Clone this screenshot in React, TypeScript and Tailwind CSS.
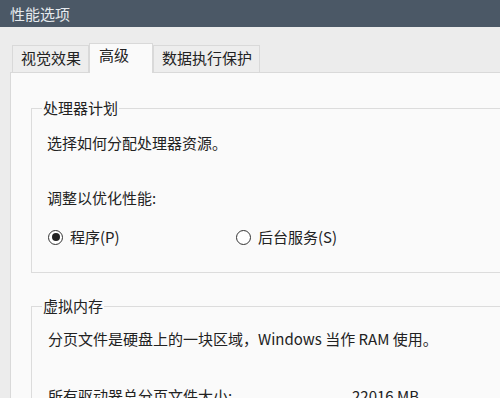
const font = "font-['Microsoft_YaHei','Noto_Sans_CJK_SC',sans-serif]";

function Tab({ label, width, active }: { label: string; width: string; active?: boolean }) {
  return (
    <div
      className={
        active
          ? `relative z-10 -mb-px flex h-[30px] items-start border-x border-t border-[#d9d9d9] bg-[#fafafa] pl-[9px] pt-[1px] ${width}`
          : `flex h-[27px] items-start border-x border-t border-[#d9d9d9] bg-[#ededed] pl-[8px] pt-[2px] ${width}`
      }
    >
      {label}
    </div>
  );
}

function Radio({ label, checked }: { label: string; checked?: boolean }) {
  return (
    <div className="flex items-center gap-[7px]">
      <span className="flex h-[15px] w-[15px] items-center justify-center rounded-full border-[1.5px] border-[#333] bg-white">
        {checked && <span className="h-[8px] w-[8px] rounded-full bg-[#222]" />}
      </span>
      <span>{label}</span>
    </div>
  );
}

export default function App() {
  return (
    <div className={`h-[398px] w-[500px] overflow-hidden bg-[#ececec] text-[15px] leading-[20px] text-[#222] ${font}`}>
      <div className="flex h-[27px] items-center bg-[#4b5866] pl-[10px] text-[#e6eaee]">性能选项</div>

      <div className="flex h-[45px] items-end pl-[12px]">
        <Tab label="视觉效果" width="w-[77px]" />
        <Tab label="高级" width="w-[64px]" active />
        <Tab label="数据执行保护" width="w-[107px]" />
      </div>

      <div className="ml-[10px] w-[560px] border-l border-t border-[#d9d9d9] bg-[#fafafa] pb-10">
        <fieldset className="ml-[20px] mt-[25px] border border-[#dcdcdc] pb-[25px] pl-[10px]">
          <legend className="px-px">处理器计划</legend>
          <div className="ml-[5px] mt-[15px]">选择如何分配处理器资源。</div>
          <div className="ml-[5px] mt-[35px]">调整以优化性能:</div>
          <div className="ml-[6px] mt-[19px] flex">
            <div className="w-[188px]">
              <Radio label="程序(P)" checked />
            </div>
            <Radio label="后台服务(S)" />
          </div>
        </fieldset>

        <fieldset className="ml-[20px] mt-[23px] border border-[#dcdcdc] pb-[25px] pl-[10px]">
          <legend className="px-px">虚拟内存</legend>
          <div className="ml-[6px] mt-[13px]">分页文件是硬盘上的一块区域，Windows 当作 RAM 使用。</div>
          <div className="ml-[6px] mt-[37px] flex">
            <span className="w-[304px]">所有驱动器总分页文件大小:</span>
            <span>22016 MB</span>
          </div>
        </fieldset>
      </div>
    </div>
  );
}
